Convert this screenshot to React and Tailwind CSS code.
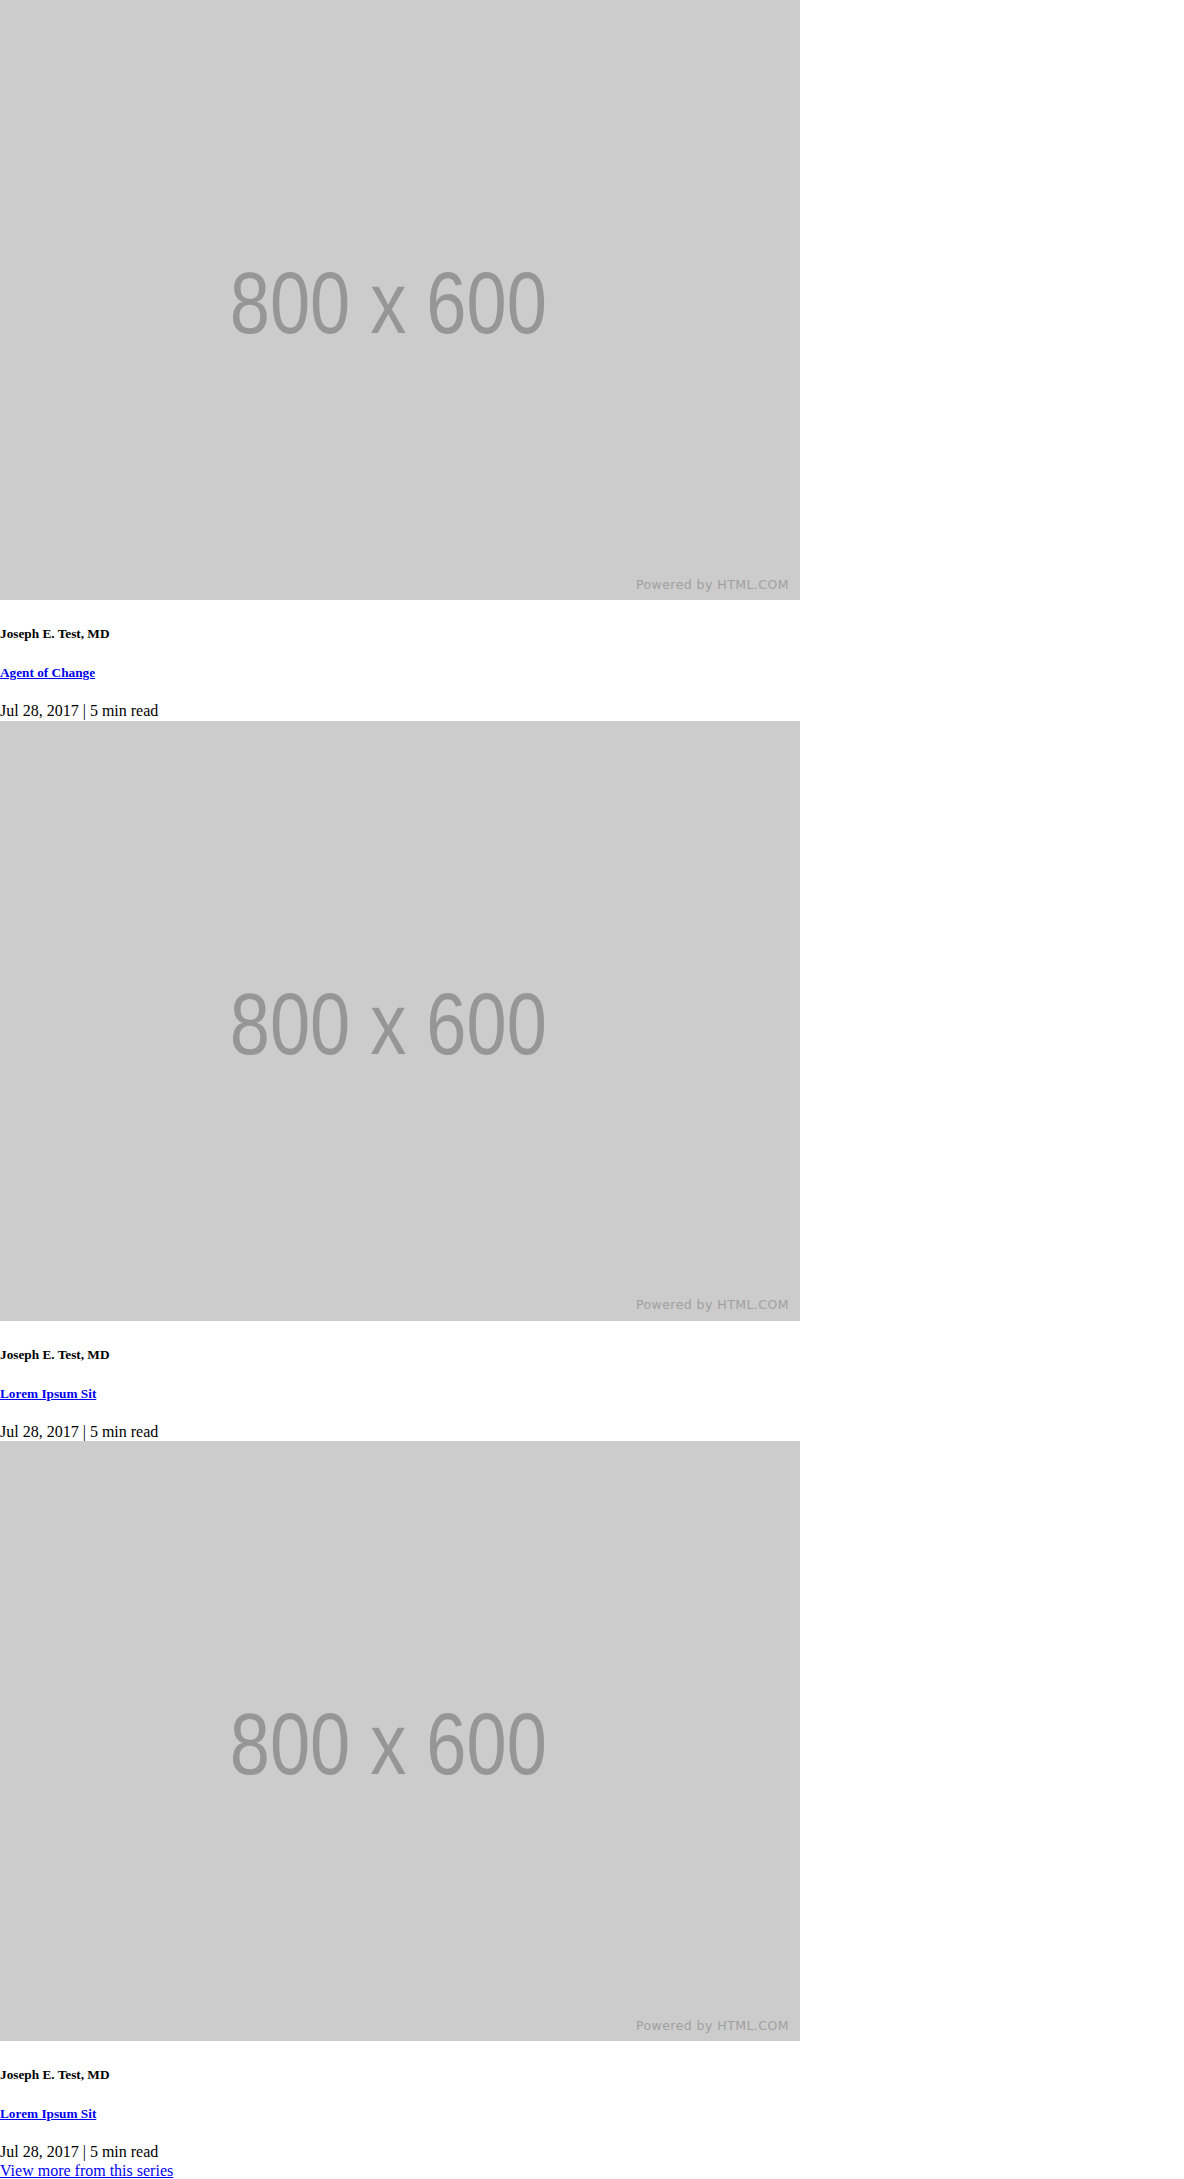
import React from "react";

function Placeholder() {
  return (
    <div className="relative w-[800px] h-[600px] bg-[#cccccc] flex items-center justify-center overflow-hidden">
      <span
        className="text-[88px] leading-none text-[#969696] mr-[23px] mt-[6px] scale-x-[0.82] whitespace-nowrap"
        style={{ fontFamily: '"Liberation Sans", Arial, sans-serif' }}
      >
        800 x 600
      </span>
      <span
        className="absolute right-[11px] bottom-[9px] text-[12.5px] tracking-[0.45px] leading-none text-[#a0a0a0]"
        style={{ fontFamily: '"DejaVu Sans", "Open Sans", sans-serif' }}
      >
        Powered by HTML.COM
      </span>
    </div>
  );
}

function Card({ title }) {
  return (
    <div>
      <Placeholder />
      <h5 className="text-[13.28px] font-bold mt-[26px] mb-0 leading-[15.3px]">Joseph E. Test, MD</h5>
      <h5 className="text-[13.28px] font-bold mt-[24px] mb-0 leading-[15.3px]">
        <a href="#" className="text-[#0000ee] underline">{title}</a>
      </h5>
      <div className="mt-[21.6px] text-[16px] leading-[18.4px]">Jul 28, 2017 | 5 min read</div>
    </div>
  );
}

export default function App() {
  return (
    <div className="bg-white text-black" style={{ fontFamily: '"Liberation Serif", "Times New Roman", serif' }}>
      <Card title="Agent of Change" />
      <Card title="Lorem Ipsum Sit" />
      <Card title="Lorem Ipsum Sit" />
      <a href="#" className="text-[16px] leading-[18.4px] text-[#0000ee] underline block w-fit">View more from this series</a>
    </div>
  );
}
